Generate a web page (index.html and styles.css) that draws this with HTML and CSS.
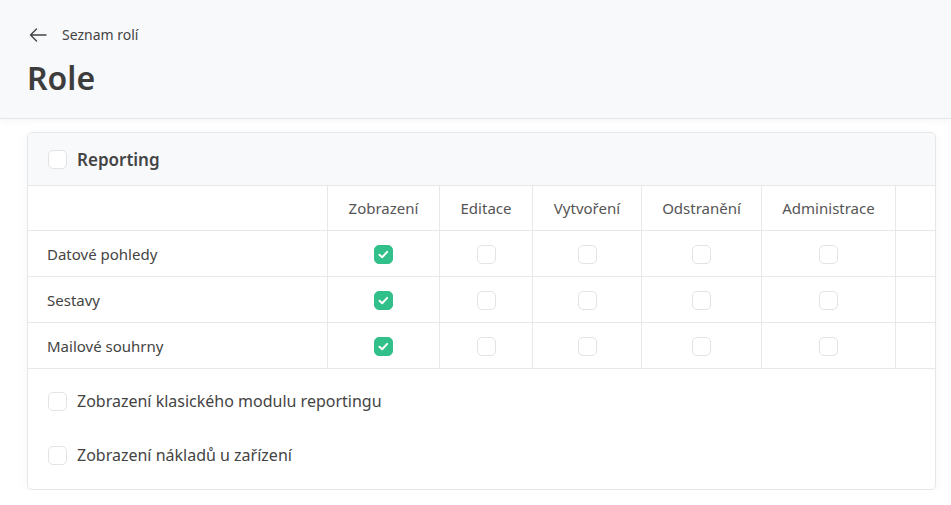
FILE: index.html
```html
<!DOCTYPE html>
<html lang="cs">
<head>
  <meta charset="UTF-8">
  <title>Role</title>
  <link rel="stylesheet" href="styles.css">
</head>
<body>

  <div class="page-head">
    <a class="back-link" href="#">
      <svg width="18" height="14" viewBox="0 0 18 14" fill="none" stroke="#444" stroke-width="1.4" stroke-linecap="round" stroke-linejoin="round">
        <path d="M17 7H1.5M7.5 1L1.5 7l6 6"/>
      </svg>
      <span>Seznam rolí</span>
    </a>
    <h1 class="title">Role</h1>
  </div>

  <div class="card">
    <div class="card-head">
      <span class="check"></span>
      <span class="card-title">Reporting</span>
    </div>

    <table class="perm-table">
      <thead>
        <tr>
          <th class="col-name"></th>
          <th class="col-a">Zobrazení</th>
          <th class="col-b">Editace</th>
          <th class="col-c">Vytvoření</th>
          <th class="col-d">Odstranění</th>
          <th class="col-e">Administrace</th>
          <th class="col-rest"></th>
        </tr>
      </thead>
      <tbody>
        <tr>
          <td>Datové pohledy</td>
          <td><span class="check on"></span></td>
          <td><span class="check"></span></td>
          <td><span class="check"></span></td>
          <td><span class="check"></span></td>
          <td><span class="check"></span></td>
          <td></td>
        </tr>
        <tr>
          <td>Sestavy</td>
          <td><span class="check on"></span></td>
          <td><span class="check"></span></td>
          <td><span class="check"></span></td>
          <td><span class="check"></span></td>
          <td><span class="check"></span></td>
          <td></td>
        </tr>
        <tr>
          <td>Mailové souhrny</td>
          <td><span class="check on"></span></td>
          <td><span class="check"></span></td>
          <td><span class="check"></span></td>
          <td><span class="check"></span></td>
          <td><span class="check"></span></td>
          <td></td>
        </tr>
      </tbody>
    </table>

    <div class="options">
      <label class="option"><span class="check"></span>Zobrazení klasického modulu reportingu</label>
      <label class="option"><span class="check"></span>Zobrazení nákladů u zařízení</label>
    </div>
  </div>

</body>
</html>
```

FILE: styles.css
```css
body {
  margin: 0;
  font-family: 'Noto Sans', 'Open Sans', sans-serif;
  color: #444;
  background: #fff;
}

.page-head {
  background: #f8f9fb;
  border-bottom: 1px solid #e4e5e7;
  box-shadow: 0 2px 6px rgba(0, 0, 0, 0.04);
  padding: 25px 27px 20px;
  height: 73px;
}

.back-link {
  display: flex;
  align-items: center;
  gap: 15px;
  color: #444;
  text-decoration: none;
  font-size: 14px;
  padding-left: 2px;
}

.title {
  margin: 14px 0 0;
  font-size: 32px;
  font-weight: 600;
  line-height: 40px;
  color: #3d3d3d;
}

.card {
  margin: 13px 15px 0 27px;
  border: 1px solid #e6e7e9;
  border-radius: 5px;
  box-shadow: 0 2px 10px rgba(0, 0, 0, 0.05);
  overflow: hidden;
}

.card-head {
  display: flex;
  align-items: center;
  gap: 10px;
  height: 52px;
  padding-left: 20px;
  background: #f8f9fb;
  border-bottom: 1px solid #e8e8e8;
}

.card-title {
  font-size: 17px;
  font-weight: 600;
  color: #444;
}

.check {
  display: inline-block;
  width: 17px;
  height: 17px;
  border: 1px solid #e3e3e3;
  border-radius: 5px;
  background: #fff;
  vertical-align: middle;
  flex: none;
}

.check.on {
  border-color: #31bf8a;
  background: #31bf8a url("data:image/svg+xml,%3Csvg xmlns='http://www.w3.org/2000/svg' viewBox='0 0 19 19'%3E%3Cpath d='M5 9.8l3 2.8 5.6-6' fill='none' stroke='white' stroke-width='2.2' stroke-linecap='round' stroke-linejoin='round'/%3E%3C/svg%3E") center / 100% no-repeat;
}

.perm-table {
  width: 100%;
  border-collapse: collapse;
  table-layout: fixed;
  font-size: 15px;
}

.perm-table th,
.perm-table td {
  border-right: 1px solid #e8e8e8;
  border-bottom: 1px solid #e8e8e8;
  text-align: center;
  padding: 0;
}

.perm-table th {
  height: 44px;
  font-weight: 400;
  color: #555;
}

.perm-table td {
  height: 45px;
}

.perm-table td:first-child {
  text-align: left;
  padding-left: 19px;
}

.perm-table th:last-child,
.perm-table td:last-child {
  border-right: none;
}

.col-name { width: 299px; }
.col-a { width: 111px; }
.col-b { width: 92px; }
.col-c { width: 108px; }
.col-d { width: 119px; }
.col-e { width: 133px; }

.options {
  padding: 5px 20px 7px;
}

.option {
  display: flex;
  align-items: center;
  gap: 10px;
  height: 54px;
  font-size: 16px;
  color: #444;
}
```
